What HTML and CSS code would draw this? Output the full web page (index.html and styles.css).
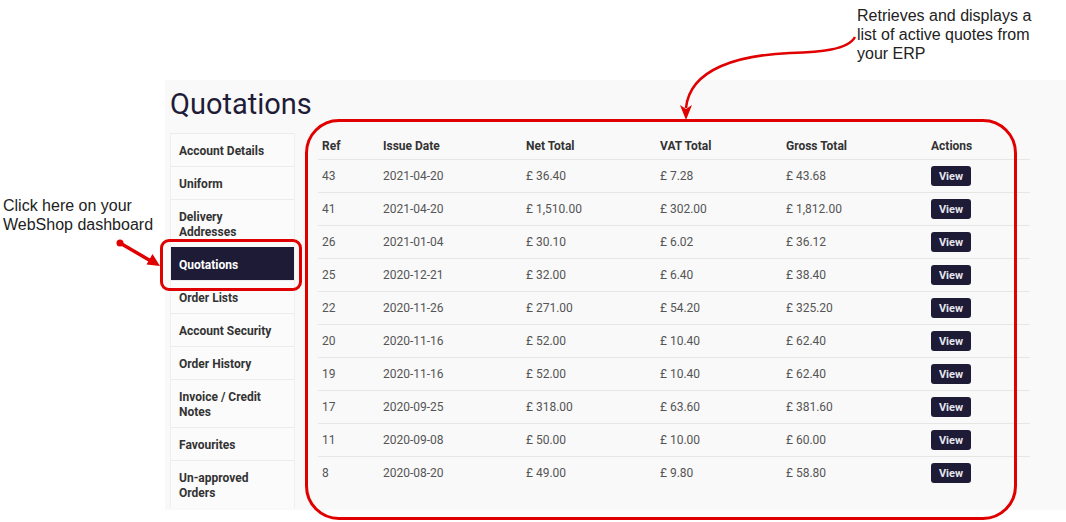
FILE: index.html
```html
<!DOCTYPE html>
<html lang="en">
<head>
    <meta charset="UTF-8">
    <meta name="viewport" content="width=device-width, initial-scale=1.0">
    <title>Quotations</title>
    <link rel="stylesheet" href="styles.css">
</head>
<body>
    <div class="panel">
        <h1 class="page-title">Quotations</h1>

        <div class="content">
            <ul class="side-nav">
                <li class="nav-item">Account Details</li>
                <li class="nav-item">Uniform</li>
                <li class="nav-item">Delivery Addresses</li>
                <li class="nav-item active">Quotations</li>
                <li class="nav-item">Order Lists</li>
                <li class="nav-item">Account Security</li>
                <li class="nav-item">Order History</li>
                <li class="nav-item">Invoice / Credit Notes</li>
                <li class="nav-item">Favourites</li>
                <li class="nav-item">Un-approved Orders</li>
            </ul>

            <table class="quotes">
                <thead>
                    <tr>
                        <th class="col-ref">Ref</th>
                        <th class="col-date">Issue Date</th>
                        <th class="col-net">Net Total</th>
                        <th class="col-vat">VAT Total</th>
                        <th class="col-gross">Gross Total</th>
                        <th class="col-actions">Actions</th>
                    </tr>
                </thead>
                <tbody>
                    <tr><td>43</td><td>2021-04-20</td><td>£ 36.40</td><td>£ 7.28</td><td>£ 43.68</td><td><button class="btn-view">View</button></td></tr>
                    <tr><td>41</td><td>2021-04-20</td><td>£ 1,510.00</td><td>£ 302.00</td><td>£ 1,812.00</td><td><button class="btn-view">View</button></td></tr>
                    <tr><td>26</td><td>2021-01-04</td><td>£ 30.10</td><td>£ 6.02</td><td>£ 36.12</td><td><button class="btn-view">View</button></td></tr>
                    <tr><td>25</td><td>2020-12-21</td><td>£ 32.00</td><td>£ 6.40</td><td>£ 38.40</td><td><button class="btn-view">View</button></td></tr>
                    <tr><td>22</td><td>2020-11-26</td><td>£ 271.00</td><td>£ 54.20</td><td>£ 325.20</td><td><button class="btn-view">View</button></td></tr>
                    <tr><td>20</td><td>2020-11-16</td><td>£ 52.00</td><td>£ 10.40</td><td>£ 62.40</td><td><button class="btn-view">View</button></td></tr>
                    <tr><td>19</td><td>2020-11-16</td><td>£ 52.00</td><td>£ 10.40</td><td>£ 62.40</td><td><button class="btn-view">View</button></td></tr>
                    <tr><td>17</td><td>2020-09-25</td><td>£ 318.00</td><td>£ 63.60</td><td>£ 381.60</td><td><button class="btn-view">View</button></td></tr>
                    <tr><td>11</td><td>2020-09-08</td><td>£ 50.00</td><td>£ 10.00</td><td>£ 60.00</td><td><button class="btn-view">View</button></td></tr>
                    <tr><td>8</td><td>2020-08-20</td><td>£ 49.00</td><td>£ 9.80</td><td>£ 58.80</td><td><button class="btn-view">View</button></td></tr>
                </tbody>
            </table>
        </div>
    </div>

    <!-- annotations drawn over the screenshot -->
    <p class="note note-left">Click here on your<br>WebShop dashboard</p>
    <p class="note note-right">Retrieves and displays a<br>list of active quotes from<br>your ERP</p>
    <div class="ring ring-nav"></div>
    <div class="ring ring-table"></div>
    <svg class="arrows" width="1066" height="522" viewBox="0 0 1066 522">
        <path d="M855 37 C848 50 820 52 790 53 C740 55 690 68 686 108" fill="none" stroke="#e00000" stroke-width="2.5"/>
        <polygon points="680,105 686,109 692,105 686,120" fill="#e00000"/>
        <circle cx="120" cy="243" r="3.5" fill="#e00000"/>
        <line x1="120" y1="243" x2="150" y2="260.5" stroke="#e00000" stroke-width="3.5"/>
        <polygon points="146.5,264.5 152.5,254 160,266" fill="#e00000"/>
    </svg>
</body>
</html>
```

FILE: styles.css
```css
body {
    margin: 0;
    background: #fff;
    font-family: Roboto, 'Liberation Sans', Arial, sans-serif;
    color: #333;
}
.panel {
    margin: 80px 0 0 165px;
    height: 430px;
    padding: 5px 0 0 5px;
    box-sizing: border-box;
    background: #f9f9f9;
}
.page-title {
    margin: 0 0 10px;
    font-size: 29px;
    line-height: 38px;
    font-weight: 400;
    color: #1f1c37;
}
.content {
    display: flex;
    gap: 23px;
    align-items: flex-start;
}
.side-nav {
    flex-shrink: 0;
    list-style: none;
    margin: 0;
    padding: 0;
    width: 125px;
    border-left: 1px solid #efefef;
    border-right: 1px solid #efefef;
    box-sizing: border-box;
    background: #fbfbfb;
}
.nav-item {
    padding: 10px 16px 7px 8px;
    border-top: 1px solid #ececec;
    font-size: 12px;
    line-height: 15px;
    font-weight: 700;
    color: #333;
}
.nav-item.active {
    background: #1e1b36;
    border-top-color: #1e1b36;
    color: #fff;
}
.quotes {
    flex-shrink: 0;
    width: 712px;
    border-collapse: collapse;
    table-layout: fixed;
    font-size: 12px;
    line-height: 15px;
}
.quotes th {
    box-sizing: border-box;
    text-align: left;
    font-weight: 700;
    color: #333;
    padding: 6px 4px 5px;
}
.quotes td {
    height: 33px;
    padding: 0 4px;
    border-top: 1px solid #e6e6e6;
    color: #555;
    vertical-align: middle;
    box-sizing: border-box;
}
.col-ref { width: 61px; }
.col-date { width: 143px; }
.col-net { width: 134px; }
.col-vat { width: 126px; }
.col-gross { width: 145px; }
.col-actions { width: 103px; }
.btn-view {
    display: block;
    width: 40px;
    height: 20px;
    padding: 0;
    border: none;
    border-radius: 3px;
    background: #1e1b36;
    color: #e6e6ee;
    font-family: Roboto, sans-serif;
    font-size: 11px;
    font-weight: 700;
}
.note {
    position: absolute;
    margin: 0;
    font-family: 'Liberation Sans', Arial, sans-serif;
    font-size: 16px;
    line-height: 19px;
    color: #222;
}
.note-left { left: 3px; top: 196px; }
.note-right { left: 857px; top: 6px; }
.ring {
    position: absolute;
    border: 3px solid #e00000;
    box-sizing: border-box;
}
.ring-nav {
    left: 160px;
    top: 239px;
    width: 142px;
    height: 52px;
    border-radius: 9px;
}
.ring-table {
    left: 305px;
    top: 119px;
    width: 712px;
    height: 401px;
    border-radius: 34px;
}
.arrows {
    position: absolute;
    left: 0;
    top: 0;
    pointer-events: none;
}
```
